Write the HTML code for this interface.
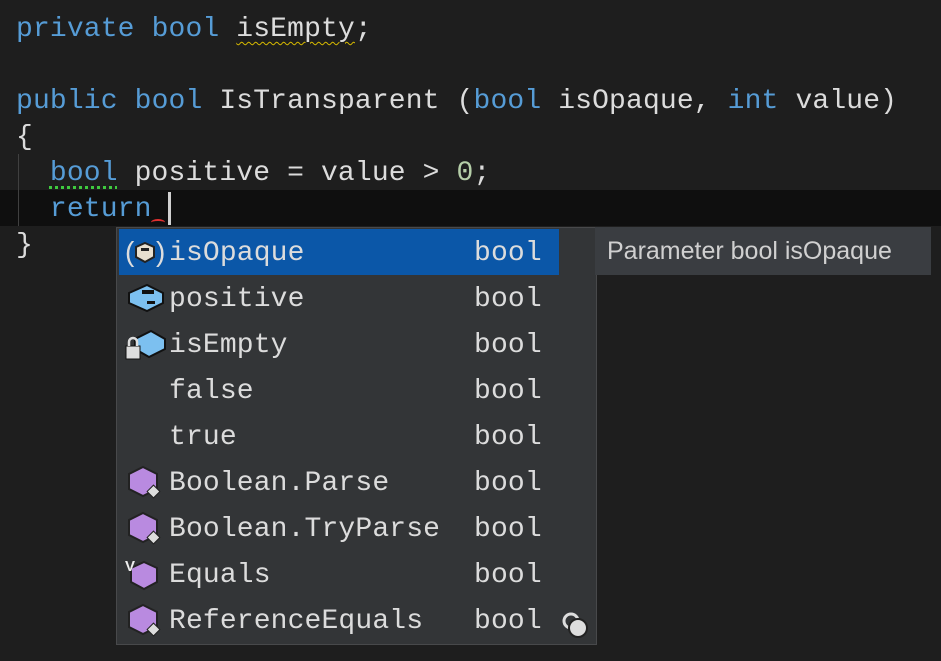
<!DOCTYPE html>
<html><head><style>
body{margin:0;width:941px;height:661px;background:#1e1e1e;overflow:hidden;position:relative;font-family:"Liberation Mono",monospace;font-size:28px;letter-spacing:0.14px;color:#dcdcdc}
.l{position:absolute;left:16px;height:36px;line-height:36px;white-space:pre}
.k{color:#569cd6}.n{color:#b5cea8}
#cur{position:absolute;left:0;top:190px;width:941px;height:36px;background:#0f0f0f}
#pop{position:absolute;left:116px;top:227px;width:481px;height:418px;background:#333537;border:1px solid #48494b;box-sizing:border-box}
.r{position:absolute;left:2px;width:440px;height:46px;line-height:50px;white-space:pre}
.r .t{position:absolute;left:50px;color:#dcdcdc}
.r .b{position:absolute;left:355px;color:#dcdcdc}
.r svg{position:absolute;left:6px;top:6px}
.sel{background:#0b57a8}
#tip{position:absolute;left:595px;top:227px;width:336px;height:48px;background:#3a3d41;font-family:"Liberation Sans",sans-serif;font-size:25px;line-height:48px;color:#d0d0d0;padding-left:12px;box-sizing:border-box;letter-spacing:0}
</style></head><body>
<div id="cur"></div>
<div class="l" style="top:12px"><span class="k">private</span> <span class="k">bool</span> <span style="text-decoration:underline wavy #d7ba00;text-decoration-thickness:1px;text-underline-offset:5px">isEmpty</span>;</div>
<div class="l" style="top:84px"><span class="k">public</span> <span class="k">bool</span> IsTransparent (<span class="k">bool</span> isOpaque, <span class="k">int</span> value)</div>
<div class="l" style="top:120px">{</div>
<div class="l" style="top:156px">  <span class="k" style="text-decoration:underline dotted #3fc93f;text-decoration-thickness:3px;text-underline-offset:6px">bool</span> positive = value &gt; <span class="n">0</span>;</div>
<div class="l" style="top:192px">  <span class="k">return</span></div>
<div style="position:absolute;left:168px;top:192px;width:3px;height:33px;background:#d0d0d0"></div>
<div style="position:absolute;left:151px;top:219px;width:14px;height:5px;border-top:2px solid #e03030;border-radius:50%"></div>
<div style="position:absolute;left:18px;top:154px;width:1px;height:72px;background:#404040"></div>
<div class="l" style="top:228px">}</div>
<div id="pop">
<div class="r sel" style="top:1px"><svg width="44" height="34"><text x="0" y="26" font-size="28" fill="#ddd" font-family="Liberation Sans">(</text><text x="31" y="26" font-size="28" fill="#ddd" font-family="Liberation Sans">)</text><polygon points="20,8 29,12 29,22 20,27 11,22 11,12" fill="#e8e0d0" stroke="#222" stroke-width="2"/><rect x="16" y="13" width="8" height="3" fill="#222"/></svg><span class="t">isOpaque</span><span class="b">bool</span></div>
<div class="r" style="top:47px"><svg width="44" height="34"><polygon points="4,12 22,4 38,12 38,22 22,30 4,22" fill="#7cc0f0" stroke="#111" stroke-width="2"/><rect x="17" y="9" width="12" height="4" fill="#111"/><rect x="22" y="20" width="8" height="3" fill="#111"/></svg><span class="t">positive</span><span class="b">bool</span></div>
<div class="r" style="top:93px"><svg width="44" height="34"><polygon points="10,12 26,4 40,12 40,22 24,30 10,22" fill="#7cc0f0" stroke="#111" stroke-width="2"/><rect x="1" y="19" width="14" height="13" fill="#ddd" stroke="#111"/><path d="M4,19 v-4 a4,4 0 0 1 8,0 v4" fill="none" stroke="#ddd" stroke-width="2.5"/></svg><span class="t">isEmpty</span><span class="b">bool</span></div>
<div class="r" style="top:139px"><span class="t">false</span><span class="b">bool</span></div>
<div class="r" style="top:185px"><span class="t">true</span><span class="b">bool</span></div>
<div class="r" style="top:231px"><svg width="44" height="34"><polygon points="18,2 32,9 32,24 18,31 4,24 4,9" fill="#b98ae0" stroke="#222" stroke-width="2"/><rect x="24" y="22" width="9" height="9" transform="rotate(45 28.5 26.5)" fill="#ddd" stroke="#222"/></svg><span class="t">Boolean.Parse</span><span class="b">bool</span></div>
<div class="r" style="top:277px"><svg width="44" height="34"><polygon points="18,2 32,9 32,24 18,31 4,24 4,9" fill="#b98ae0" stroke="#222" stroke-width="2"/><rect x="24" y="22" width="9" height="9" transform="rotate(45 28.5 26.5)" fill="#ddd" stroke="#222"/></svg><span class="t">Boolean.TryParse</span><span class="b">bool</span></div>
<div class="r" style="top:323px"><svg width="44" height="34"><polygon points="19,5 32,11 32,25 19,32 6,25 6,11" fill="#b98ae0" stroke="#222" stroke-width="2"/><text x="0" y="14" font-size="15" fill="#eee" font-family="Liberation Sans" font-weight="bold">V</text></svg><span class="t">Equals</span><span class="b">bool</span></div>
<div class="r" style="top:369px"><svg width="44" height="34"><polygon points="18,2 32,9 32,24 18,31 4,24 4,9" fill="#b98ae0" stroke="#222" stroke-width="2"/><rect x="24" y="22" width="9" height="9" transform="rotate(45 28.5 26.5)" fill="#ddd" stroke="#222"/></svg><span class="t">ReferenceEquals</span><span class="b">bool</span></div>
<svg style="position:absolute;left:444px;top:383px" width="30" height="30"><circle cx="10" cy="10" r="7" fill="none" stroke="#ddd" stroke-width="3"/><circle cx="17" cy="17" r="9" fill="#ddd" stroke="#222" stroke-width="2"/></svg>
</div>
<div id="tip">Parameter bool isOpaque</div>
</body></html>
